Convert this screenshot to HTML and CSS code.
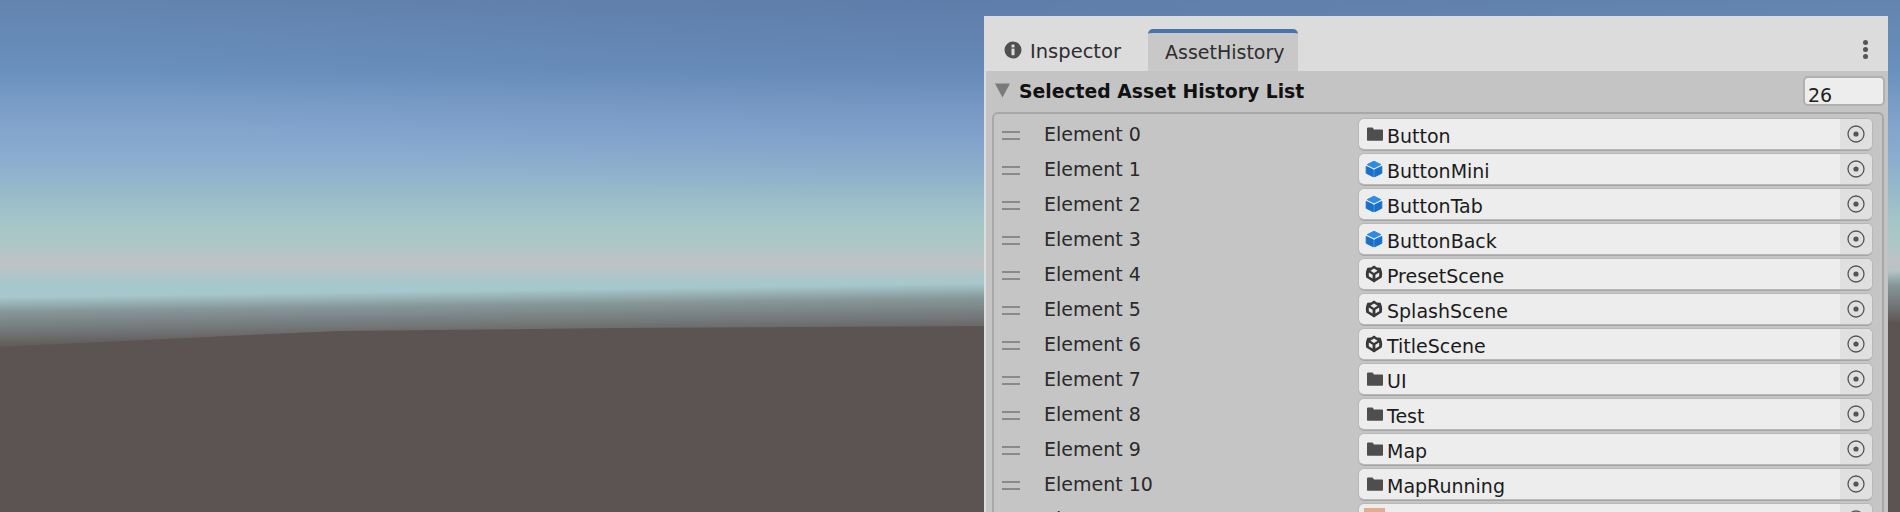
FILE: index.html
```html
<!DOCTYPE html>
<html lang="en">
<head>
<meta charset="utf-8">
<title>AssetHistory</title>
<link rel="stylesheet" href="styles.css">
</head>
<body>
<main class="scene">
  <section class="panel">
    <header class="tabs">
      <div class="tab">
        <svg class="tab-icon" viewBox="0 0 18 18"><circle cx="9" cy="9" r="8.5" fill="#4f4f4f"/><rect x="7.5" y="7.6" width="3" height="6.6" fill="#dcdcdc"/><rect x="7.5" y="3.6" width="3" height="2.8" fill="#dcdcdc"/></svg>
        <span class="tab-name">Inspector</span>
      </div>
      <div class="tab tab-active"><span>AssetHistory</span></div>
      <div class="tab-menu"><i></i><i></i><i></i></div>
    </header>
    <div class="body">
      <div class="list-head">
        <svg class="fold" viewBox="0 0 16 15"><path d="M0 0h16L8 15z" fill="#7a7a7a"/></svg>
        <strong class="list-title">Selected Asset History List</strong>
        <div class="count">26</div>
      </div>
      <div class="list">
        <div class="row"><div class="grip"></div><div class="label">Element 0</div><div class="field"><svg class="ico"><use href="#folder"/></svg><span class="val">Button</span><div class="pick"><svg viewBox="0 0 18 18"><use href="#target"/></svg></div></div></div>
        <div class="row"><div class="grip"></div><div class="label">Element 1</div><div class="field"><svg class="ico"><use href="#cube"/></svg><span class="val">ButtonMini</span><div class="pick"><svg viewBox="0 0 18 18"><use href="#target"/></svg></div></div></div>
        <div class="row"><div class="grip"></div><div class="label">Element 2</div><div class="field"><svg class="ico"><use href="#cube"/></svg><span class="val">ButtonTab</span><div class="pick"><svg viewBox="0 0 18 18"><use href="#target"/></svg></div></div></div>
        <div class="row"><div class="grip"></div><div class="label">Element 3</div><div class="field"><svg class="ico"><use href="#cube"/></svg><span class="val">ButtonBack</span><div class="pick"><svg viewBox="0 0 18 18"><use href="#target"/></svg></div></div></div>
        <div class="row"><div class="grip"></div><div class="label">Element 4</div><div class="field"><svg class="ico"><use href="#unity"/></svg><span class="val">PresetScene</span><div class="pick"><svg viewBox="0 0 18 18"><use href="#target"/></svg></div></div></div>
        <div class="row"><div class="grip"></div><div class="label">Element 5</div><div class="field"><svg class="ico"><use href="#unity"/></svg><span class="val">SplashScene</span><div class="pick"><svg viewBox="0 0 18 18"><use href="#target"/></svg></div></div></div>
        <div class="row"><div class="grip"></div><div class="label">Element 6</div><div class="field"><svg class="ico"><use href="#unity"/></svg><span class="val">TitleScene</span><div class="pick"><svg viewBox="0 0 18 18"><use href="#target"/></svg></div></div></div>
        <div class="row"><div class="grip"></div><div class="label">Element 7</div><div class="field"><svg class="ico"><use href="#folder"/></svg><span class="val">UI</span><div class="pick"><svg viewBox="0 0 18 18"><use href="#target"/></svg></div></div></div>
        <div class="row"><div class="grip"></div><div class="label">Element 8</div><div class="field"><svg class="ico"><use href="#folder"/></svg><span class="val">Test</span><div class="pick"><svg viewBox="0 0 18 18"><use href="#target"/></svg></div></div></div>
        <div class="row"><div class="grip"></div><div class="label">Element 9</div><div class="field"><svg class="ico"><use href="#folder"/></svg><span class="val">Map</span><div class="pick"><svg viewBox="0 0 18 18"><use href="#target"/></svg></div></div></div>
        <div class="row"><div class="grip"></div><div class="label">Element 10</div><div class="field"><svg class="ico"><use href="#folder"/></svg><span class="val">MapRunning</span><div class="pick"><svg viewBox="0 0 18 18"><use href="#target"/></svg></div></div></div>
        <div class="row"><div class="grip"></div><div class="label">Element 11</div><div class="field"><div class="thumb"></div><div class="pick"><svg viewBox="0 0 18 18"><use href="#target"/></svg></div></div></div>
      </div>
    </div>
  </section>
</main>
<svg class="defs" aria-hidden="true">
  <symbol id="folder" viewBox="0 0 18 18"><path d="M2 3.5C2 3 2.4 2.6 3 2.6h4.5l1.5 1.9h8c.6 0 1 .4 1 1v9.3c0 .6-.4 1-1 1H3c-.6 0-1-.4-1-1z" fill="#4e4e4e"/></symbol>
  <symbol id="cube" viewBox="0 0 18 18"><path d="M9 1.2 15.8 4.6 9 7.9 2.2 4.6z" fill="#2b8be6" stroke="#2b8be6" stroke-linejoin="round"/><path d="M1.2 6.4 8.3 9.8V16.8L1.2 13.2z" fill="#1770cc" stroke="#1770cc" stroke-linejoin="round"/><path d="M16.8 6.4 9.7 9.8V16.8L16.8 13.2z" fill="#1770cc" stroke="#1770cc" stroke-linejoin="round"/></symbol>
  <symbol id="unity" viewBox="0 0 18 18"><path d="M9 .6 12 2.4 15.6 2.8 16.8 6 17.2 9 16.8 12.4 12.8 15 9 17.4 5.2 15 1.2 12.4 .8 9 1.2 6 2.4 2.8 6 2.4z" fill="#383838"/><path d="M9 3.6 12.6 5.8 9 8 5.4 5.8zM3.8 7.6 7.6 9.8V13.4L3.8 11.2zM14.2 7.6 10.4 9.8V13.4L14.2 11.2z" fill="#ececec"/></symbol>
  <symbol id="target" viewBox="0 0 18 18"><circle cx="9" cy="9" r="8" fill="none" stroke="#555" stroke-width="1.3"/><circle cx="9" cy="9" r="2.6" fill="#555"/></symbol>
</svg>
</body>
</html>
```

FILE: styles.css
```css
* { box-sizing: border-box; }
html, body { margin: 0; height: 512px; overflow: hidden; }
body { font-family: "DejaVu Sans", sans-serif; color: #222; }

.scene {
  position: relative;
  height: 512px;
  padding: 16px 12px 0 984px;
  background:
    linear-gradient(179.2deg,
      rgba(132, 146, 148, 0) 297px, rgba(132, 146, 148, .92) 312px,
      #6e7070 335px, #5e5856 348px, #5b5452 352px),
    radial-gradient(ellipse 900px 200px at 950px 0, rgba(80, 100, 150, .22), rgba(80, 100, 150, 0)),
    linear-gradient(180deg,
      #6384af 0, #6a90bd 70px, #7a9dc8 105px, #84a6cf 135px, #8fb1cd 170px, #98bbca 195px,
      #a3c6c9 222px, #b0c6c6 248px, #c0c1c3 264px, #b5c4c7 272px, #a6c8cc 283px, #a6c8cc 512px);
}
.scene::before {
  content: "";
  position: absolute;
  inset: 0;
  background: #5b5452;
  clip-path: polygon(0 347px, 80px 343px, 250px 335px, 340px 331px, 620px 328px, 1000px 326px, 1900px 322px, 1900px 512px, 0 512px);
}

.panel {
  position: relative;
  height: 496px;
  display: flex;
  flex-direction: column;
  background: #dcdcdc;
  overflow: hidden;
}

.tabs {
  flex: 0 0 55px;
  display: flex;
  align-items: flex-end;
  padding-right: 20px;
  font-size: 19px;
  color: #2e2e2e;
}
.tab {
  height: 42px;
  display: flex;
  align-items: center;
  gap: 8px;
  padding-left: 20px;
  width: 164px;
}
.tab-name { font-size: 19.5px; margin-top: 2px; }
.tab-icon { width: 18px; height: 18px; flex: none; }
.tab-active {
  width: 150px;
  padding-left: 17px;
  background: #c8c8c8;
  border-top: 4px solid #4a74ad;
  border-radius: 5px 5px 0 0;
}
.tab-menu {
  margin: 0 0 12px auto;
  display: flex;
  flex-direction: column;
  gap: 2px;
}
.tab-menu i { width: 5px; height: 5px; border-radius: 50%; background: #555; }

.body {
  flex: 1;
  margin-left: 2px;
  background: #c4c4c4;
  min-height: 0;
}
.list-head {
  height: 41px;
  display: flex;
  align-items: flex-start;
  padding: 0 3px 0 9px;
}
.fold { width: 15px; height: 15px; flex: none; margin: 12px 9px 0 0; }
.list-title { font-size: 18.8px; font-weight: 700; color: #111; margin-top: 10px; }
.count {
  margin: 5px 0 0 auto;
  width: 82px;
  height: 30px;
  padding: 6px 0 0 3px;
  font-size: 19px;
  line-height: 22px;
  background: #ededed;
  border: 2px solid #b0b0b0;
  border-radius: 5px;
}

.list {
  margin: 0 4px 0 6px;
  padding: 5px 10px 0 0;
  border: 2px solid #a8a8a8;
  border-bottom: 0;
  border-radius: 6px 6px 0 0;
  display: flex;
  flex-direction: column;
  gap: 5px;
  background: #c5c5c5;
}
.row {
  height: 30px;
  flex: none;
  display: flex;
  align-items: center;
}
.grip {
  width: 18px;
  height: 9px;
  margin: 2px 0 0 8px;
  border-top: 2px solid #8a8a8a;
  border-bottom: 2px solid #8a8a8a;
}
.label {
  width: 315px;
  margin-left: 24px;
  font-size: 19px;
  color: #2a2a2a;
}
.field {
  flex: 1;
  height: 30px;
  display: flex;
  align-items: center;
  gap: 4px;
  padding-left: 6px;
  font-size: 19px;
  color: #1c1c1c;
  background: #ededed;
  border-radius: 5px;
  box-shadow: 0 0 0 1px #b8b8b8, 0 2px 0 #a6a6a6;
  overflow: hidden;
}
.ico { width: 18px; height: 18px; flex: none; }
.val { margin-top: 4px; white-space: nowrap; }
.thumb { width: 21px; height: 22px; flex: none; margin: 4px 0 0 -1px; align-self: flex-start; background: #e2ad8c; }
.pick {
  margin-left: auto;
  width: 32px;
  height: 100%;
  display: flex;
  align-items: center;
  justify-content: center;
  background: #e0e0e0;
}
.pick svg { width: 18px; height: 18px; }
.defs { position: absolute; width: 0; height: 0; }
```
